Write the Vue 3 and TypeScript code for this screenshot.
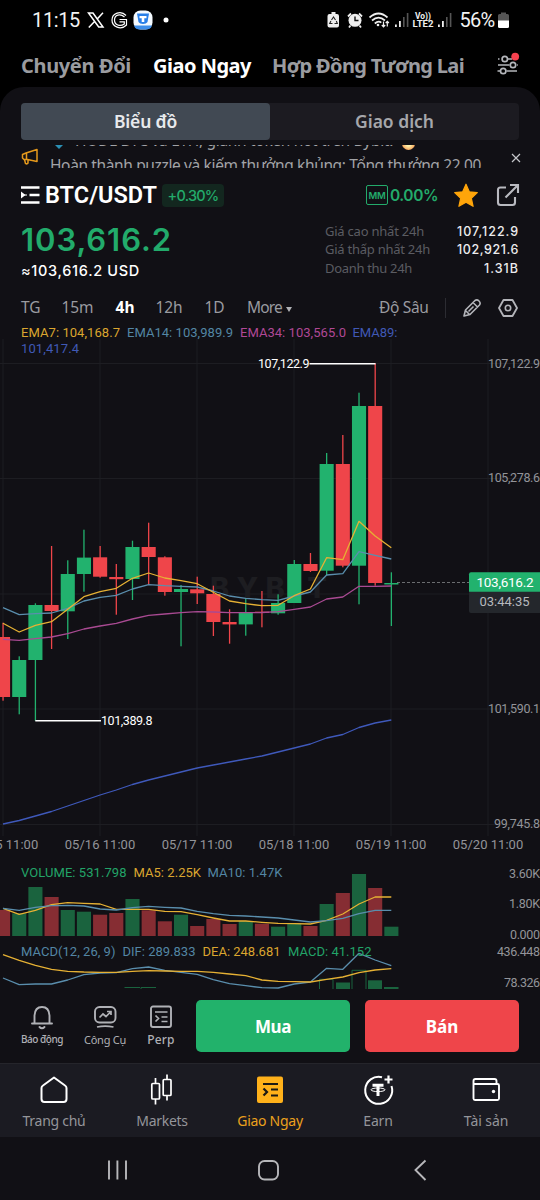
<script setup lang="ts">
type Pt = { x: number; y: number }

// Spreads the letters of a label so that it fills the given width in pixels.
const vFit = {
  mounted(el: HTMLElement, binding: { value: number }) {
    const n = (el.textContent || '').trim().length
    const w = el.getBoundingClientRect().width
    el.style.letterSpacing = `${((binding.value - w) / n).toFixed(3)}px`
  },
}

const STEP = 16.18
const cx = (i: number) => 3 + STEP * i

// [up, body top, body bottom, wick top, wick bottom]
const raw: [number, number, number, number, number][] = [
  [0, 637, 697, 622.7, 700.7], [1, 660, 697, 656.3, 714.3], [1, 605, 660, 603.3, 720.7],
  [0, 605, 611, 546, 649], [1, 574, 611.3, 560.3, 639], [1, 557.6, 574, 529.7, 591.7],
  [0, 557.3, 576.7, 546, 577.7], [0, 577, 579.2, 564, 614.7], [1, 547, 579, 540.7, 600],
  [0, 547, 557, 522.7, 584.7], [0, 557.3, 592, 556.3, 595.7], [1, 589, 592, 585, 646.3],
  [0, 589.3, 593.3, 576.7, 604], [0, 594, 622, 585.7, 636], [0, 622, 624.4, 609.3, 643.7],
  [1, 612, 624.4, 599, 635.7], [0, 611.7, 613, 591, 627.3], [1, 603, 613.3, 594.3, 614.7],
  [1, 564, 603, 560, 603], [0, 564, 571, 553, 572], [1, 464, 570.7, 453, 575.3],
  [0, 464, 565.7, 435, 567.3], [1, 406, 565.7, 392.7, 604.3], [0, 406, 583, 363.3, 585.7],
  [1, 583, 584.5, 572.3, 626],
]
const volTop = [910, 913.3, 887, 897, 910, 911.7, 914.7, 913, 899, 910.3, 921.3, 914.7, 926, 919, 924, 921, 923.7, 926.7, 923.7, 926, 904, 893, 874, 888, 926.7]
const candles = raw.map((c, i) => ({
  x: cx(i), cls: c[0] ? 'up' : 'down', top: c[1], h: c[2] - c[1], w1: c[3], w2: c[4], vol: volTop[i],
}))

const line = (ys: number[]) =>
  ys.map((y, i): Pt => ({ x: cx(i), y })).map(p => `${p.x.toFixed(1)},${p.y}`).join(' ')

const lines = [
  { cls: 'pink', pts: line([639.3, 640.3, 638.7, 637, 633.7, 629, 626, 623.3, 619, 615.3, 614, 612.7, 611.7, 612, 612.7, 612.7, 612.5, 611.7, 609.3, 607, 599, 597, 586.3, 586.3, 586]) },
  { cls: 'teal', pts: line([607.7, 614.7, 613.7, 613, 608.3, 601, 597.3, 595.3, 589, 584.7, 585.7, 586.3, 587, 591, 596, 598.3, 599.7, 600.3, 596, 592, 575, 573.7, 551.7, 555.3, 559]) },
  { cls: 'gold', pts: line([623.3, 632, 625.3, 621.7, 609.3, 596.7, 591.7, 588.3, 578.3, 573, 578, 580.7, 583.7, 592.3, 601, 603.7, 605.7, 605.3, 595.7, 589, 557.7, 559.7, 521.3, 536, 547.7]) },
  { cls: 'blue', pts: line([824, 820.5, 816, 811.5, 806, 800.5, 795, 790, 784.5, 780, 776, 772, 768, 765, 762, 759, 756, 752, 748, 744, 738, 734.5, 727.5, 723, 720]) },
  { cls: 'gold', pts: line([908.3, 914.3, 910.3, 904.7, 902.7, 903.3, 904, 909.3, 909.3, 909.3, 911.3, 911.7, 914.7, 918, 921, 921, 922.3, 923.3, 923.7, 924, 920.3, 914, 904, 897, 897]) },
  { cls: 'teal', pts: line([908.3, 910.3, 907.3, 905.7, 905.3, 906, 909, 910, 907.7, 906.3, 907.3, 908, 911.3, 913.7, 915.3, 916, 917, 918, 920, 922, 920.7, 918.3, 913.7, 910.3, 910.3]) },
  { cls: 'teal', pts: line([978, 984.7, 984, 984, 980, 974.7, 973, 972.7, 968.7, 967, 970.3, 972.3, 974.3, 979.7, 983.7, 985.7, 987.7, 988, 984, 982, 968.3, 969.3, 953.3, 960, 965.7]) },
  { cls: 'gold', pts: line([954.7, 960.3, 965.3, 969.3, 971.3, 972, 972.3, 972.3, 971.3, 970.7, 971, 971.3, 971.3, 972.3, 974, 975.7, 980, 981.3, 981.7, 982, 979.3, 977, 972.7, 970, 968.7]) },
]

const gridX = [3, 100, 197, 294, 391, 488]
const gridY = [363.5, 478.5, 594, 709, 824.5]
const dates = ['15', '16', '17', '18', '19', '20'].map((d, i) => ({ t: `05/${d} 11:00`, x: 3 + 97 * i }))
const axis = [
  { t: '107,122.9', y: 367.5, w: 52 }, { t: '105,278.6', y: 482.3, w: 52 }, { t: '101,590.1', y: 712.5, w: 52 },
  { t: '99,745.8', y: 827.5, w: 46 }, { t: '3.60K', y: 877.7, w: 31 }, { t: '1.80K', y: 908.3, w: 31 },
  { t: '0.000', y: 939.3, w: 30 }, { t: '436.448', y: 956.3, w: 43 }, { t: '78.326', y: 987.3, w: 36 },
]
const legend = [
  { t: 'EMA7: 104,168.7', x: 21, y: 337.3, w: 99, cls: 'gold' },
  { t: 'EMA14: 103,989.9', x: 127, y: 337.3, w: 106, cls: 'teal' },
  { t: 'EMA34: 103,565.0', x: 240, y: 337.3, w: 106, cls: 'pink' },
  { t: 'EMA89:', x: 352.5, y: 337.3, w: 45, cls: 'blue' },
  { t: '101,417.4', x: 21, y: 353.3, w: 58, cls: 'blue' },
  { t: 'VOLUME: 531.798', x: 21, y: 876.6, w: 105.5, cls: 'green' },
  { t: 'MA5: 2.25K', x: 133.5, y: 876.6, w: 67.5, cls: 'gold' },
  { t: 'MA10: 1.47K', x: 207.5, y: 876.6, w: 75, cls: 'teal' },
  { t: 'MACD(12, 26, 9)', x: 21, y: 955.6, w: 94.5, cls: 'teal' },
  { t: 'DIF: 289.833', x: 122.5, y: 955.6, w: 73, cls: 'teal' },
  { t: 'DEA: 248.681', x: 202.5, y: 955.6, w: 78, cls: 'gold' },
  { t: 'MACD: 41.152', x: 288, y: 955.6, w: 83.5, cls: 'green' },
]
const stats = [
  { k: 'Giá cao nhất 24h', kw: 99, v: '107,122.9', vw: 62 },
  { k: 'Giá thấp nhất 24h', kw: 105, v: '102,921.6', vw: 62 },
  { k: 'Doanh thu 24h', kw: 87, v: '1.31B', vw: 35 },
]
</script>

<template>
  <div class="screen">
    <div class="status">
      <span class="clock" v-fit="48">11:15</span>
      <svg class="s-left" width="90" height="24" viewBox="86 8 90 24">
        <path d="M88.500 13H93L103 27H98.700ZM103 12.800L97 19.300M94.300 21.700L88.800 27.500" fill="none" stroke="#fff" stroke-width="1.500" />
        <path d="M126 15.500C121 10 112 13 112 20S121 30.500 126.500 25V19.500H119.500" fill="none" stroke="#fff" stroke-width="1.200" />
        <path d="M124.500 17C120 13 114.500 15 114.500 20S120 27 124.300 24V21.800H119.500" fill="none" stroke="#fff" stroke-width="1.200" />
        <rect x="133.500" y="10.500" width="19" height="19" rx="7" fill="#f4faff" />
        <path d="M134 25.500H152C151 28.500 148.500 29.500 146 29.500H140C137 29.500 135 28.500 134 25.500Z" fill="#3d8eea" />
        <path d="M137 13.500H149L147.500 22C146 24.500 140 24.500 138.500 22Z" fill="#287fe8" />
        <path d="M139.500 16H146.500V18.200H144.300V22H141.700V18.200H139.500Z" fill="#fff" />
        <circle cx="166" cy="20" r="2.500" fill="#fff" />
      </svg>
      <svg class="s-right" width="130" height="24" viewBox="325 8 130 24">
        <path d="M329.500 14h2v-2h4v2h1.500q2 0 2 2v9.500q0 2-2 2h-7.500q-2 0-2-2V16q0-2 2-2Z" fill="#eee" />
        <path d="M331.500 20l2-3 2 3M336.300 21l1 2.500h-2.800M332.500 23.500h-2.800l1.200-2.500" fill="none" stroke="#222" stroke-width="1.100" />
        <circle cx="355" cy="20.300" r="6.500" fill="#eee" />
        <path d="M348 16.500l3-3M362 16.500l-3-3M350.500 25.500l-1.500 2M359.500 25.500l1.500 2" stroke="#eee" stroke-width="1.800" />
        <path d="M355 16.500v4h3.500" fill="none" stroke="#111" stroke-width="1.400" />
        <path d="M369.500 17.500q9-8 18 0M372 20.500q6.500-5.800 13 0M374.800 23.500q3.700-3.200 6.500-.8" fill="none" stroke="#eee" stroke-width="1.700" />
        <circle cx="378" cy="25" r="1.300" fill="#eee" />
        <path d="M383.500 21.500v5M381.800 25l1.700 1.800 1.700-1.800M387.300 26.500v-5M385.700 23l1.600-1.700 1.600 1.700" fill="none" stroke="#eee" stroke-width="1.200" />
        <g fill="#eee"><rect x="395" y="24.500" width="1.800" height="2.500" /><rect x="399" y="21" width="1.800" height="6" /><rect x="438" y="24.500" width="1.800" height="2.500" /><rect x="442" y="21" width="1.800" height="6" /></g>
        <g fill="#555"><rect x="403" y="17" width="1.600" height="10" /><rect x="406.800" y="13" width="1.600" height="14" /><rect x="446" y="17" width="1.600" height="10" /><rect x="449.800" y="13" width="1.600" height="14" /></g>
        <text x="415" y="18.500" class="volte" textLength="16" lengthAdjust="spacingAndGlyphs">Vo))</text>
        <text x="412.500" y="27.200" class="volte" textLength="21" lengthAdjust="spacingAndGlyphs">LTE2</text>
      </svg>
      <span class="pct" v-fit="35">56%</span>
      <svg class="batt" width="11" height="16" viewBox="0 0 11 16"><path d="M3 2V.5h5V2h1.500Q11 2 11 3.500V9H0V3.500Q0 2 1.500 2Z" fill="#555" /><path d="M0 8.500h11v6Q11 16 9.500 16h-8Q0 16 0 14.500Z" fill="#fff" /></svg>
    </div>

    <div class="tabs">
      <span class="t1" v-fit="110">Chuyển Đổi</span>
      <span class="t2" v-fit="98">Giao Ngay</span>
      <span class="t3" v-fit="192">Hợp Đồng Tương Lai</span>
      <svg class="filter" width="24" height="26" viewBox="496 50 24 26">
        <g fill="none" stroke="#b4b6bb" stroke-width="1.700">
          <path d="M498 58h1.500M508 58h4M498 64h11.500M517 64h.8M497.500 70h3M506.500 70h10.500" />
          <circle cx="504.800" cy="58" r="2.700" /><circle cx="513" cy="64" r="2.700" /><circle cx="503.200" cy="70" r="2.700" />
        </g>
        <circle cx="515.200" cy="55.600" r="3.900" fill="#f6414f" />
      </svg>
    </div>

    <main class="panel">
      <div class="segment">
        <div class="seg on"><span v-fit="63">Biểu đồ</span></div>
        <div class="seg"><span v-fit="79">Giao dịch</span></div>
      </div>

      <div class="notice">
        <svg width="18" height="18" viewBox="0 0 18 18" class="horn"><path d="M1.500 6.500L5 5 16 1.500V13.500L6.500 11.500H3L1.500 10ZM3.500 11.500L4.500 15.500Q6 16.500 7 15V12M5.500 5.500V11.500" fill="none" stroke="#e5991c" stroke-width="1.500" stroke-linejoin="round" /></svg>
        <div class="ticker">
          <div class="tick-row first"><i class="gem"></i><span v-fit="318">HODL BTC và ETH, giành token hot trên Bybit!</span><i class="flame"></i></div>
          <div class="tick-row second"><span v-fit="431">Hoàn thành puzzle và kiếm thưởng khủng: Tổng thưởng 22,00</span></div>
        </div>
        <svg width="10" height="10" viewBox="0 0 10 10" class="close"><path d="M1 1l8 8M9 1l-8 8" stroke="#c5c6ca" stroke-width="1.200" /></svg>
      </div>

      <div class="pair">
        <svg width="19" height="18" viewBox="0 0 19 18"><path d="M0 1.500h18.500M8.500 9h10M0 16.500h18.500" stroke="#fff" stroke-width="2.400" /><path d="M0 5.500l4.500 3.500L0 12.500Z" fill="#fff" /><path d="M3 9h3" stroke="#fff" stroke-width="1" /></svg>
        <span class="symbol" v-fit="112">BTC/USDT</span>
        <span class="chg"><span v-fit="51">+0.30%</span></span>
        <span class="mm"><span v-fit="17">MM</span></span>
        <span class="zero" v-fit="48">0.00%</span>
        <svg class="star" width="26" height="25" viewBox="0 0 26 25"><path d="M13 1.200l3.300 7.600 8 .8-6 5.600 1.800 8.100L13 19.200l-7.100 4.100 1.800-8.100-6-5.600 8-.8Z" fill="#ffa50a" stroke="#ffa50a" stroke-width="1.200" stroke-linejoin="round" /></svg>
        <svg class="share" width="24" height="24" viewBox="0 0 24 24"><path d="M10 4.500H4.500Q2 4.500 2 7V19.500Q2 22 4.500 22H16.500Q19 22 19 19.500V14M9.500 14.500L21.500 2.500M14 2H22V10" fill="none" stroke="#b9bac0" stroke-width="2.100" /></svg>
      </div>

      <div class="quote">
        <div class="q-left">
          <div class="price"><span v-fit="151">103,616.2</span></div>
          <div class="usd"><span v-fit="119">≈103,616.2 USD</span></div>
        </div>
        <div class="stats">
          <div v-for="s in stats" :key="s.k" class="stat"><span class="k" v-fit="s.kw">{{ s.k }}</span><span class="v" v-fit="s.vw">{{ s.v }}</span></div>
        </div>
      </div>

      <div class="frames">
        <span class="f1" v-fit="19.500">TG</span>
        <span class="f2" v-fit="32">15m</span>
        <span class="f3 active" v-fit="19">4h</span>
        <span class="f4" v-fit="27">12h</span>
        <span class="f5" v-fit="20">1D</span>
        <span class="f6" v-fit="35">More</span>
        <i class="caret"></i>
        <span class="depth" v-fit="49.500">Độ Sâu</span>
        <i class="sep"></i>
        <svg class="pencil" width="20" height="20" viewBox="0 0 20 20"><path d="M2 18l1.500-6L13 2.500Q15 1 17 3t.5 4L8 16.500ZM11 4.500L15.500 9M6.500 13.500L11.500 8.500M3.500 12.500L7.500 16.500" fill="none" stroke="#b4b5ba" stroke-width="1.600" stroke-linejoin="round" /></svg>
        <svg class="hex" width="20" height="18" viewBox="0 0 20 18"><path d="M5.500 1H14.500L19 9 14.500 17H5.500L1 9Z" fill="none" stroke="#b4b5ba" stroke-width="1.800" stroke-linejoin="round" /><circle cx="10" cy="9" r="2.700" fill="none" stroke="#b4b5ba" stroke-width="1.600" /></svg>
      </div>

      <svg class="chart" width="540" height="664" viewBox="0 325 540 664">
        <g class="grid">
          <line v-for="x in gridX" :key="x" :x1="x" :x2="x" y1="339" y2="836" />
          <line v-for="y in gridY" :key="y" x1="0" x2="540" :y1="y" :y2="y" />
        </g>
        <text class="mark" x="210" y="598" textLength="117">BYBIT</text>
        <g v-for="(c, i) in candles" :key="i" :class="c.cls">
          <rect :x="c.x - 0.6" :y="c.w1" width="1.300" :height="c.w2 - c.w1" />
          <rect :x="c.x - 7" :y="c.top" width="14.100" :height="c.h" />
          <rect class="vol" :x="c.x - 7" :y="c.vol" width="14.100" :height="936 - c.vol" />
        </g>
        <g class="hollow">
          <path d="M124.500 987.500h15.500M141 989v-1.500h15M319.500 989V979.300H333V989M352 989V970.300H366V989" />
        </g>
        <g class="histo">
          <rect x="336" y="982.500" width="14" height="6.500" /><rect x="368" y="980.300" width="14" height="8.700" /><rect x="384" y="987" width="14.500" height="2" />
        </g>
        <polyline v-for="(l, i) in lines" :key="'l' + i" :points="l.pts" :class="['ln', l.cls]" />
        <path d="M309.500 363.800H375.500M35.300 720.700H101" stroke="#fff" stroke-width="1.400" />
        <path d="M397 582.500H469" stroke="#6b6d70" stroke-width="1" stroke-dasharray="3 2" />
        <text class="peak" x="258" y="367.500" textLength="51.500">107,122.9</text>
        <text class="peak" x="101" y="725.200" textLength="51.500">101,389.8</text>
        <text v-for="d in dates" :key="d.t" class="axis date" :x="d.x" y="849" text-anchor="middle" textLength="70.500">{{ d.t }}</text>
        <text v-for="a in axis" :key="a.t" class="axis" :x="540 - a.w" :y="a.y" :textLength="a.w">{{ a.t }}</text>
        <text v-for="l in legend" :key="l.t" :x="l.x" :y="l.y" :textLength="l.w" :class="['lg', l.cls]">{{ l.t }}</text>
        <rect x="469" y="591" width="74" height="22" rx="2" fill="#24272c" />
        <path d="M471 572.300H540V591.800H469V574.300Q469 572.300 471 572.300Z" fill="#22b26e" />
        <text x="476.500" y="586.500" class="tag" textLength="57">103,616.2</text>
        <text x="479.500" y="605.800" class="tag dim" textLength="50">03:44:35</text>
      </svg>

      <div class="actions">
        <div class="tool a1">
          <svg width="24" height="26" viewBox="0 0 24 26"><path d="M2 18.500H22M4.500 18V10.500Q5 2 12 2T19.500 10.500V18" fill="none" stroke="#b0b1b6" stroke-width="1.900" stroke-linecap="round" /><path d="M9.500 22q2.500 2.600 5 0" fill="none" stroke="#b0b1b6" stroke-width="1.900" stroke-linecap="round" /></svg>
          <span v-fit="42">Báo động</span>
        </div>
        <div class="tool a2">
          <svg width="24" height="26" viewBox="0 0 24 26"><rect x="2" y="2" width="20.500" height="15.500" rx="4.500" fill="none" stroke="#b0b1b6" stroke-width="1.900" /><path d="M6.500 12.500L10 9l3 2.500L17.500 7M14 6.500h4V10M4 22q8-1.800 16.500 0" fill="none" stroke="#b0b1b6" stroke-width="1.700" /></svg>
          <span v-fit="42">Công Cụ</span>
        </div>
        <div class="tool a3">
          <svg width="24" height="26" viewBox="0 0 24 26"><rect x="2" y="1.500" width="20" height="20.500" rx="2" fill="none" stroke="#b0b1b6" stroke-width="1.900" /><path d="M6 7H18.500M12.500 12H18.500M12.500 16.500H18.500M6.500 10.500L9.500 13.500 6.500 16.500" fill="none" stroke="#b0b1b6" stroke-width="1.700" /></svg>
          <span v-fit="27.500">Perp</span>
        </div>
        <button class="buy"><span v-fit="36">Mua</span></button>
        <button class="sell"><span v-fit="32.500">Bán</span></button>
      </div>
    </main>

    <nav class="nav">
      <div class="item">
        <svg width="32" height="32" viewBox="0 0 32 32"><path d="M16 3.500L27 11.500Q28.500 12.500 28.500 14V25Q28.500 28 25.500 28H6.500Q3.500 28 3.500 25V14Q3.500 12.500 5 11.500Z" fill="none" stroke="#fff" stroke-width="2" stroke-linejoin="round" /></svg>
        <span v-fit="63">Trang chủ</span>
      </div>
      <div class="item">
        <svg width="32" height="32" viewBox="0 0 32 32"><path d="M9.500 4v5M9.500 25v5.500M21 .500V5.500M21 21.500V26.500" stroke="#fff" stroke-width="1.700" /><rect x="5.800" y="9.500" width="7.700" height="15.500" rx="1" fill="none" stroke="#fff" stroke-width="1.700" /><rect x="17.200" y="5.500" width="7.800" height="16" rx="1" fill="none" stroke="#fff" stroke-width="1.700" /></svg>
        <span v-fit="51.500">Markets</span>
      </div>
      <div class="item on">
        <svg width="32" height="32" viewBox="0 0 32 32"><rect x="3" y="2.500" width="26" height="26.500" rx="2" fill="#ffb11a" /><path d="M9 10H24M17 15.500H24M17 21.500H24M9.500 14.500L13 18 9.500 21.500" fill="none" stroke="#1d1a14" stroke-width="2.200" /></svg>
        <span v-fit="65.500">Giao Ngay</span>
      </div>
      <div class="item">
        <svg width="34" height="32" viewBox="0 0 34 32"><path d="M21 3.200A13.500 13.500 0 1 0 30.500 12" fill="none" stroke="#fff" stroke-width="2" /><path d="M27.500 1.500V9.500M23.500 5.500H31.500" stroke="#fff" stroke-width="2.200" /><path d="M11.500 11.300H22.500M17 11.300V22" stroke="#fff" stroke-width="3" /><ellipse cx="17" cy="15.800" rx="7" ry="1.800" fill="none" stroke="#fff" stroke-width="1" /></svg>
        <span v-fit="29.500">Earn</span>
      </div>
      <div class="item">
        <svg width="32" height="32" viewBox="0 0 32 32"><path d="M3.500 10V7Q3.500 5 5.500 5H24.500Q26.500 5 26.500 7V10M3.500 10H27.500Q29 10 29 11.500V24.500Q29 26 27.500 26H5Q3.500 26 3.500 24.500Z" fill="none" stroke="#fff" stroke-width="1.900" /><circle cx="23.500" cy="17.500" r="1.700" fill="#fff" /></svg>
        <span v-fit="44.500">Tài sản</span>
      </div>
    </nav>

    <div class="sysnav">
      <svg width="540" height="63" viewBox="0 0 540 63" fill="none" stroke="#b7b7ba" stroke-width="1.900">
        <path d="M109 23.500V42.500M117.400 23.500V42.500M126 23.500V42.500" />
        <rect x="259" y="24" width="19" height="18.500" rx="5.500" />
        <path d="M425.500 23.500L415.500 33 425.500 43" />
      </svg>
    </div>
  </div>
</template>

<style>
html,
body {
  margin: 0;
  background: #000;
}
</style>

<style scoped>
.screen {
  width: 540px;
  height: 1200px;
  overflow: hidden;
  display: flex;
  flex-direction: column;
  background: #000;
  color: #fff;
  font-family: 'Noto Sans', 'Open Sans', sans-serif;
}
.screen span {
  white-space: nowrap;
  flex: none;
}
svg {
  flex: none;
  display: block;
}
.status {
  height: 40px;
  display: flex;
  align-items: center;
  box-sizing: border-box;
  font-family: Roboto, sans-serif;
}
.clock {
  font-size: 20px;
  margin-left: 32px;
  color: #f3f3f3;
}
.s-left {
  margin-left: 6px;
}
.s-right {
  margin-left: 149px;
}
.volte {
  font: 700 8.5px Roboto, sans-serif;
  fill: #eee;
}
.pct {
  font-size: 20px;
  margin-left: 4.5px;
  color: #f3f3f3;
}
.batt {
  margin-left: 3px;
}
.tabs {
  height: 47px;
  display: flex;
  align-items: center;
  padding: 0 0 0 21px;
  font-size: 20px;
  font-weight: 700;
  color: #9b9ca0;
  line-height: 26px;
}
.tabs span {
  margin-top: 4px;
}
.t2 {
  margin-left: 22px;
  color: #fff;
}
.t3 {
  margin-left: 21px;
}
.filter {
  margin-left: 32px;
}
.panel {
  height: 976px;
  flex: none;
  background: #111015;
  border-radius: 24px 24px 0 0;
  display: flex;
  flex-direction: column;
}
.segment {
  height: 37px;
  margin: 16px 21px 0;
  display: flex;
  background: #1c1b21;
  border-radius: 4px;
  flex: none;
}
.seg {
  flex: 1;
  display: flex;
  align-items: center;
  justify-content: center;
  font-size: 17.5px;
  font-weight: 600;
  line-height: 22px;
  color: #a6a7ab;
}
.seg span {
  margin-bottom: 2px;
}
.seg.on {
  background: #414953;
  color: #e8eaed;
  border-radius: 4px;
}
.notice {
  height: 38px;
  flex: none;
  display: flex;
  padding: 0 18px 0 21px;
}
.horn {
  margin-top: 8px;
}
.ticker {
  width: 434px;
  height: 23px;
  margin: 5px 0 0 11px;
  overflow: hidden;
  font-size: 15.5px;
  color: #a2a3a7;
}
.tick-row {
  display: flex;
  height: 22px;
  line-height: 22px;
}
.first {
  margin-top: -16px;
}
.second {
  margin-top: 3px;
}
.first span {
  margin-left: 12px;
}
.gem {
  margin: 16px 0 0 5px;
  width: 0;
  height: 0;
  border: 4px solid transparent;
  border-top: 4.5px solid #2b8fb4;
}
.flame {
  margin: 6px 0 0 9px;
  width: 13px;
  height: 15px;
  border-radius: 7px;
  background: radial-gradient(circle at 50% 60%, #fff0a8 20%, #ef7930 75%);
}
.close {
  margin: 13px 0 0 27px;
}
.pair {
  height: 34px;
  flex: none;
  display: flex;
  align-items: center;
  padding-left: 21px;
}
.symbol {
  margin-left: 5px;
  font: 600 23.5px Roboto, sans-serif;
}
.chg {
  margin-left: 5px;
  width: 62px;
  height: 23px;
  display: flex;
  align-items: center;
  justify-content: center;
  border-radius: 4px;
  background: #13271f;
  color: #23ab6b;
  font: 500 14.5px Inter, sans-serif;
}
.mm {
  width: 20px;
  height: 18px;
  margin-left: 142px;
  display: flex;
  align-items: center;
  justify-content: center;
  border: 1.5px solid #23ab6b;
  border-radius: 2px;
  color: #23ab6b;
  font: 600 9.5px Inter, sans-serif;
}
.zero {
  margin-left: 2px;
  color: #23ab6b;
  font: 600 15.5px Inter, sans-serif;
}
.star {
  margin-left: 15px;
}
.share {
  margin-left: 17px;
}
.quote {
  height: 78px;
  flex: none;
  display: flex;
}
.q-left {
  width: 304px;
  padding: 11px 0 0 21px;
}
.price {
  height: 34px;
  line-height: 34px;
  font-family: Inter, sans-serif;
  font-size: 31px;
  font-weight: 600;
  color: #22ab6b;
}
.usd {
  margin-top: 4px;
  font-family: Inter, sans-serif;
  font-size: 14.5px;
  font-weight: 500;
  line-height: 20px;
}
.stats {
  flex: 1;
  padding: 10px 21px 0 0;
}
.stat {
  display: flex;
  justify-content: space-between;
  height: 18.4px;
  line-height: 18px;
  font-size: 13px;
}
.k {
  color: #5b5c62;
}
.v {
  color: #ececee;
  font-family: Inter, sans-serif;
  font-size: 12.5px;
  font-weight: 500;
  line-height: 20px;
}
.frames {
  height: 35px;
  flex: none;
  display: flex;
  align-items: center;
  padding-left: 21px;
  font-size: 15.5px;
  color: #9a9ba0;
}
.frames span {
  margin-bottom: 2px;
}
.f2 {
  margin-left: 21px;
}
.f3 {
  margin-left: 22px;
}
.f4 {
  margin-left: 21px;
}
.f5 {
  margin-left: 22px;
}
.f6 {
  margin-left: 22.5px;
}
.active {
  color: #fff;
  font-weight: 700;
}
.caret {
  margin: 3px 0 0 4px;
  border: 3.5px solid transparent;
  border-top: 5px solid #b0b1b5;
  border-bottom: 0;
}
.depth {
  margin-left: 87px;
}
.sep {
  width: 1px;
  height: 20px;
  background: #2c2c32;
  margin-left: 16px;
}
.pencil {
  margin-left: 16px;
}
.hex {
  margin-left: 16.5px;
}
.grid line {
  stroke: #1d1d22;
  stroke-width: 1;
}
.mark {
  font: 800 29px Inter, sans-serif;
  fill: #1d1d21;
}
.up {
  fill: #22b26e;
}
.down {
  fill: #ef454a;
}
.up .vol {
  fill: #1a633e;
}
.down .vol {
  fill: #862d33;
}
.hollow path {
  fill: none;
  stroke: #1a633e;
}
.histo {
  fill: #1a633e;
}
.ln {
  fill: none;
  stroke-width: 1.3;
  stroke-linejoin: round;
}
.ln.gold {
  stroke: #e6b134;
}
.ln.teal {
  stroke: #5a8ead;
}
.ln.pink {
  stroke: #a94a92;
}
.ln.blue {
  stroke: #3f59bb;
}
.peak {
  font: 12.5px Roboto, sans-serif;
  fill: #fff;
}
.axis {
  font: 12.5px Roboto, sans-serif;
  fill: #939499;
}
.date {
  font-size: 13px;
}
.lg {
  font: 13px Roboto, sans-serif;
}
.lg.gold {
  fill: #dba62f;
}
.lg.teal {
  fill: #5386a4;
}
.lg.pink {
  fill: #b04896;
}
.lg.blue {
  fill: #4059b5;
}
.lg.green {
  fill: #22a468;
}
.tag {
  font: 13.5px Roboto, sans-serif;
  fill: #fff;
}
.tag.dim {
  font-size: 13px;
  fill: #b7b9bd;
}
.actions {
  height: 74px;
  flex: none;
  display: flex;
  padding: 11px 21px 0;
  box-sizing: border-box;
}
.tool {
  display: flex;
  flex-direction: column;
  align-items: center;
  padding-top: 5px;
  font-size: 11px;
  line-height: 15px;
  color: #b0b1b6;
}
.tool span {
  margin-top: 1px;
}
.a1 {
  width: 42px;
}
.a2 {
  width: 42px;
  margin-left: 21px;
}
.a3 {
  width: 28px;
  margin-left: 21px;
  font-size: 12px;
  font-weight: 500;
}
.a1 span {
  font-size: 10px;
  font-weight: 500;
}
button {
  border: 0;
  border-radius: 5px;
  height: 52px;
  width: 154px;
  padding: 0;
  color: #fff;
  font: 700 17px 'Noto Sans', sans-serif;
}
.buy {
  background: #22b26b;
  margin-left: 21px;
}
.sell {
  background: #ef454a;
  margin-left: 15px;
}
.nav {
  height: 74px;
  flex: none;
  display: flex;
  background: #1b1b22;
  box-sizing: border-box;
  border-top: 1px solid #25252b;
}
.item {
  flex: 1;
  display: flex;
  flex-direction: column;
  align-items: center;
  padding-top: 10px;
  font-size: 14px;
  line-height: 20px;
  color: #94959a;
}
.item span {
  margin-top: 5px;
}
.item.on {
  color: #eba11d;
}
.sysnav {
  height: 63px;
  flex: none;
  background: #111015;
}
</style>
